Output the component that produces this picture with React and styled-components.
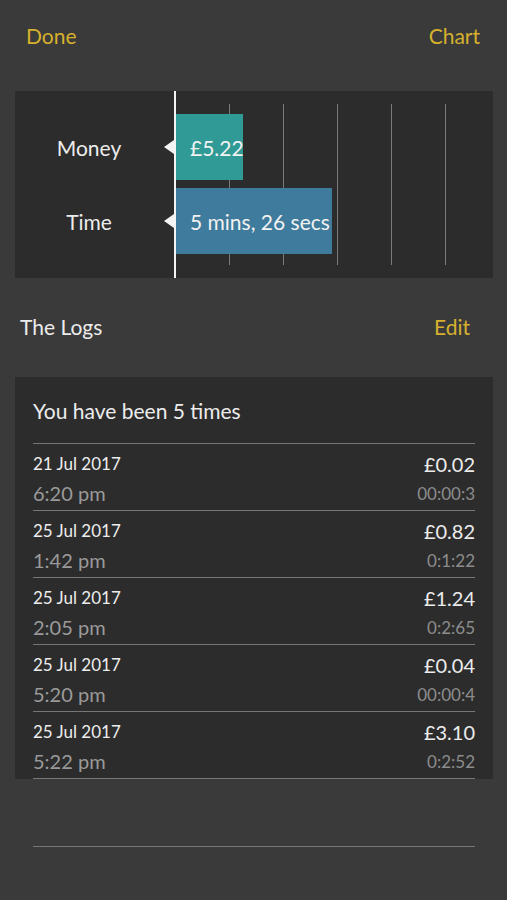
import styled, { createGlobalStyle } from "styled-components";

const Global = createGlobalStyle`
  html, body { margin: 0; padding: 0; background: #3a3a3a; }
  body { font-family: Lato, "Noto Sans", sans-serif; }
`;

const Page = styled.div`
  width: 507px;
  height: 900px;
  background: #3a3a3a;
  display: flex;
  flex-direction: column;
  overflow: hidden;
`;

const Bar = styled.div`
  display: flex;
  justify-content: space-between;
  align-items: center;
  height: ${(p) => p.h}px;
  margin-bottom: ${(p) => p.mb || 0}px;
  padding: 0 ${(p) => p.pr}px 0 ${(p) => p.pl}px;
  font-size: 21px;
  color: #ececec;
`;

const Gold = styled.span`
  color: #d6b12e;
  font-size: 21px;
`;

const ChartPanel = styled.div`
  margin: 0 14px 0 15px;
  height: 187px;
  background: #2c2c2c;
  display: flex;
`;

const Labels = styled.div`
  width: 159px;
  padding: 23px 11px 0 0;
  box-sizing: border-box;
  display: flex;
  flex-direction: column;
  gap: 8px;
`;

const Label = styled.div`
  height: 66px;
  display: flex;
  align-items: center;
  justify-content: center;
  color: #ececec;
  font-size: 21px;
`;

const Plot = styled.div`
  flex: 1;
  position: relative;
  border-left: 2px solid #f4f4f4;
  padding-top: 23px;
  display: flex;
  flex-direction: column;
  gap: 8px;
`;

const Grid = styled.div`
  position: absolute;
  top: 13px;
  bottom: 13px;
  left: 0;
  right: 0;
  background: repeating-linear-gradient(
    to right,
    transparent 0 53px,
    #7a7a7a 53px 54px
  );
`;

const ValueBar = styled.div`
  position: relative;
  z-index: 1;
  height: 66px;
  width: ${(p) => p.w}px;
  background: ${(p) => p.color};
  color: #f2f2f2;
  font-size: 21px;
  display: flex;
  align-items: center;
  padding-left: 14px;
  box-sizing: border-box;
  white-space: nowrap;

  &::before {
    content: "";
    position: absolute;
    left: -12px;
    top: 26px;
    border-top: 7px solid transparent;
    border-bottom: 7px solid transparent;
    border-right: 10px solid #f4f4f4;
  }
`;

const LogPanel = styled.div`
  margin: 0 14px 0 15px;
  background: #2c2c2c;
  padding: 0 18px;
`;

const Count = styled.div`
  height: 66px;
  display: flex;
  align-items: center;
  color: #ececec;
  font-size: 21px;
  border-bottom: 1px solid #777;
`;

const Row = styled.div`
  height: 66px;
  border-bottom: 1px solid #777;
  display: grid;
  grid-template-columns: 1fr auto;
  grid-template-rows: 39px 20px;
  align-content: start;
  align-items: center;
`;

const Date = styled.span`
  color: #ececec;
  font-size: 17px;
`;

const Clock = styled.span`
  color: #9a9a9a;
  font-size: 20px;
`;

const Amount = styled.span`
  color: #ececec;
  font-size: 20px;
  text-align: right;
`;

const Duration = styled.span`
  color: #8c8c8c;
  font-size: 17px;
  text-align: right;
`;

const Empty = styled.div`
  margin: 0 32px 0 33px;
  height: 67px;
  border-bottom: 1px solid #777;
`;

const logs = [
  { date: "21 Jul 2017", time: "6:20 pm", amount: "£0.02", dur: "00:00:3" },
  { date: "25 Jul 2017", time: "1:42 pm", amount: "£0.82", dur: "0:1:22" },
  { date: "25 Jul 2017", time: "2:05 pm", amount: "£1.24", dur: "0:2:65" },
  { date: "25 Jul 2017", time: "5:20 pm", amount: "£0.04", dur: "00:00:4" },
  { date: "25 Jul 2017", time: "5:22 pm", amount: "£3.10", dur: "0:2:52" },
];

export default function App() {
  return (
    <Page>
      <Global />
      <Bar h={70} mb={21} pl={26} pr={27}>
        <Gold>Done</Gold>
        <Gold>Chart</Gold>
      </Bar>
      <ChartPanel>
        <Labels>
          <Label>Money</Label>
          <Label>Time</Label>
        </Labels>
        <Plot>
          <Grid />
          <ValueBar w={67} color="#2f9a96">£5.22</ValueBar>
          <ValueBar w={156} color="#3f7b9c">5 mins, 26 secs</ValueBar>
        </Plot>
      </ChartPanel>
      <Bar h={97} mb={2} pl={20} pr={37}>
        <span>The Logs</span>
        <Gold>Edit</Gold>
      </Bar>
      <LogPanel>
        <Count>You have been 5 times</Count>
        {logs.map((l, i) => (
          <Row key={i}>
            <Date>{l.date}</Date>
            <Amount>{l.amount}</Amount>
            <Clock>{l.time}</Clock>
            <Duration>{l.dur}</Duration>
          </Row>
        ))}
      </LogPanel>
      <Empty />
    </Page>
  );
}
